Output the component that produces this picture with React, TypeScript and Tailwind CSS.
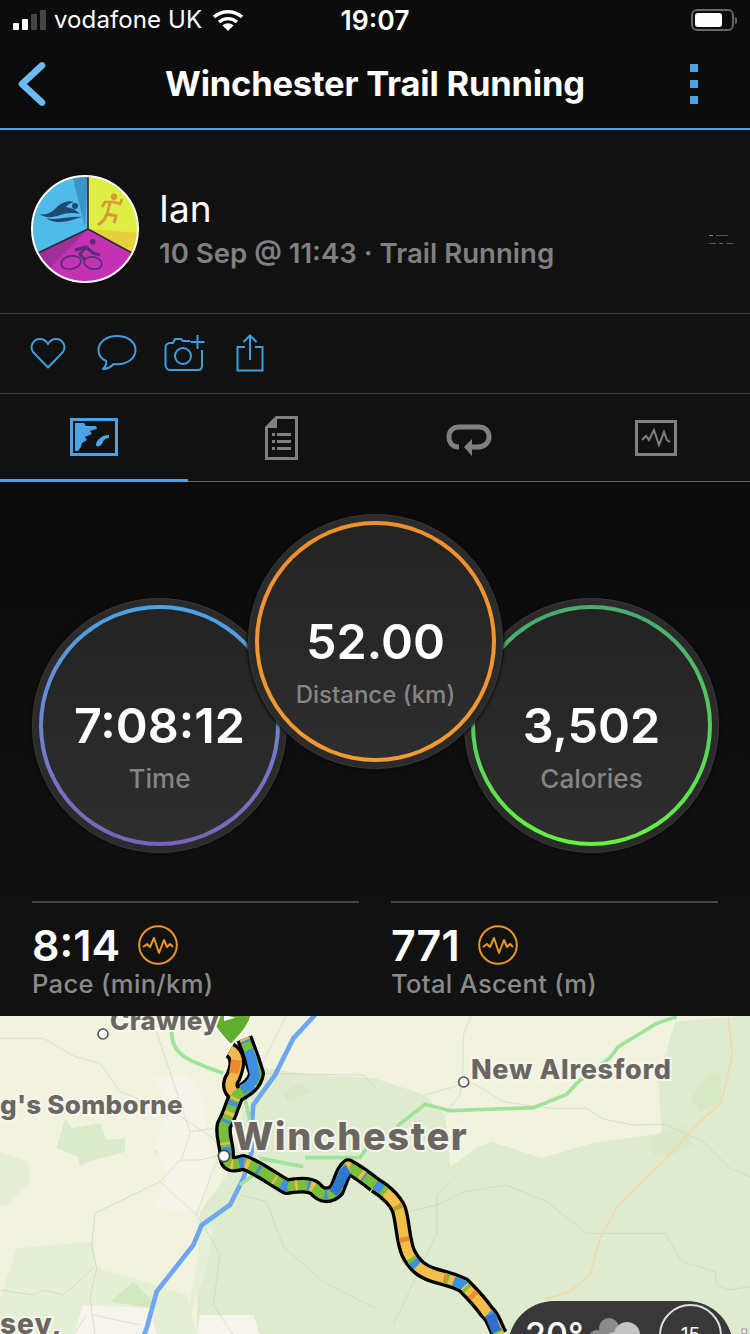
const font = "font-['Inter','Liberation_Sans',sans-serif]";

function Signal() {
  return (
    <div className="flex items-end gap-[3px] h-[20px] w-[33px]">
      <span className="w-[6px] h-[7px] rounded-[1px] bg-white" />
      <span className="w-[6px] h-[11px] rounded-[1px] bg-white" />
      <span className="w-[6px] h-[16px] rounded-[1px] bg-[#444]" />
      <span className="w-[6px] h-[20px] rounded-[1px] bg-[#444]" />
    </div>
  );
}

function Wifi() {
  return (
    <svg width="32" height="22" viewBox="0 0 32 22" fill="none" stroke="white" strokeWidth="3.4">
      <path d="M2 8c8-7 20-7 28 0" />
      <path d="M7 13c5-4.500 13-4.500 18 0" />
      <path d="M11.500 17.500c2.500-2 6.500-2 9 0" />
      <path d="M16 22l-3.500-3.800c2-1.500 5-1.500 7 0z" fill="white" stroke="none" />
    </svg>
  );
}

function Battery() {
  return (
    <div className="flex items-center gap-[1px]">
      <div className="w-[43px] h-[22px] rounded-[6px] border-2 border-[#666] p-[2px]">
        <div className="w-[27px] h-full rounded-[3px] bg-white" />
      </div>
      <span className="w-[2px] h-[7px] rounded-r-sm bg-[#666]" />
    </div>
  );
}

function StatusBar() {
  return (
    <div className="relative flex items-center justify-between h-[40px] px-[13px] text-white">
      <div className="flex items-center">
        <Signal />
        <span className="ml-[8px] text-[24px] leading-none tracking-[0.1px]">vodafone UK</span>
        <span className="ml-[10px]"><Wifi /></span>
      </div>
      <Battery />
      <span className="absolute left-0 right-0 text-center text-[26.500px] font-semibold leading-none">19:07</span>
    </div>
  );
}

function NavBar() {
  return (
    <div className="flex items-center h-[90px] pl-[18px] pr-[52px] border-b-2 border-[#4ba3e3]">
      <svg width="28" height="44" viewBox="0 0 28 44" fill="none" stroke="#6cbcf2" strokeWidth="6.500" strokeLinecap="round" strokeLinejoin="round">
        <path d="M24 3.500 4 22l20 18.500" />
      </svg>
      <h1 className="flex-1 pl-[14px] text-center text-white text-[34.500px] font-bold leading-none tracking-[-0.2px]">Winchester Trail Running</h1>
      <div className="flex flex-col gap-[8px]">
        <span className="w-[8px] h-[8px] bg-[#4ba3e3]" />
        <span className="w-[8px] h-[8px] bg-[#4ba3e3]" />
        <span className="w-[8px] h-[8px] bg-[#4ba3e3]" />
      </div>
    </div>
  );
}

function Avatar() {
  return (
    <svg width="110" height="110" viewBox="0 0 110 110" className="shrink-0">
      <defs>
        <clipPath id="avatarClip"><circle cx="55" cy="55" r="53" /></clipPath>
      </defs>
      <g clipPath="url(#avatarClip)">
        <rect width="110" height="110" fill="#4fbbe8" />
        <path d="M58 55V0H110V85L102 79z" fill="#dfee45" />
        <path d="M58 55 110 59 102 79z" fill="#e8cf3c" />
        <path d="M58 55 102 79 90 120H20L8 79z" fill="#c432b4" />
        <path d="M58 55 8 79 20 94z" fill="#a02f98" />
        <path d="M43 4 58 2 55 53z" fill="#3d94c6" />
        <path d="M58 2V55L102 79M58 55 8 79" stroke="#2a2a3a" strokeWidth="1.600" fill="none" />
        {/* swimmer */}
        <path d="M9 40C16 42 22 38 27 33 31 29 38 26 44 28 40 29 37 31 36 33 39 34 42 34 45 36L50 40C42 38 36 39 30 41 22 44 15 44 9 40z" fill="#1d4a72" />
        <circle cx="45" cy="32" r="3" fill="#1d4a72" />
        <path d="M16 44C26 47 40 42 52 43 42 46 26 52 16 44z" fill="#1d4a72" />
        {/* runner */}
        <circle cx="84" cy="22.700" r="3.200" fill="#d69a38" />
        <g fill="none" stroke="#d69a38" strokeWidth="3.200" strokeLinejoin="round">
          <path d="M80 29 77 40M72 33 75 28 84 28 90 30 92 25" strokeWidth="2.600" />
          <path d="M77 40 86 42 84 49M77 40 74 46 68 51" />
        </g>
        {/* cyclist */}
        <circle cx="62.700" cy="67.700" r="2.800" fill="#5b2c78" />
        <path d="M45 76 56 73 63 79 70 81M56 73 50 80 55 86" fill="none" stroke="#5b2c78" strokeWidth="3" strokeLinejoin="round" />
        <ellipse cx="41" cy="88.500" rx="10" ry="6.500" fill="none" stroke="#5b2c78" strokeWidth="1.800" transform="rotate(-12 41 88.500)" />
        <ellipse cx="63" cy="89" rx="9" ry="6" fill="none" stroke="#5b2c78" strokeWidth="1.800" transform="rotate(12 63 89)" />
      </g>
      <circle cx="55" cy="55" r="53" fill="none" stroke="white" strokeWidth="2" />
    </svg>
  );
}

function ProfileRow() {
  return (
    <div className="relative flex items-center h-[184px] pl-[30px] pt-[14px] border-b border-[#3a3a3a]">
      <Avatar />
      <div className="ml-[19px] mt-[1px]">
        <div className="text-white text-[37px] leading-[44px]">Ian</div>
        <div className="mt-[3px] text-[#808080] text-[27.600px] leading-[38px] font-semibold">10 Sep @ 11:43 · Trail Running</div>
      </div>
      <div className="absolute left-[709px] top-[105px] flex flex-col gap-[7px]">
        <div className="flex gap-[3px]"><span className="w-[4px] h-[1px] bg-[#888]" /><span className="w-[12px] h-[1px] bg-[#555]" /></div>
        <div className="flex gap-[3px]"><span className="w-[7px] h-[1px] bg-[#555]" /><span className="w-[4px] h-[1px] bg-[#666]" /><span className="w-[7px] h-[1px] bg-[#555]" /></div>
      </div>
    </div>
  );
}

function ActionRow() {
  const stroke = "#3c9ee0";
  return (
    <div className="flex items-center h-[80px] pl-[30px] pb-[2px] border-b border-[#3a3a3a]">
      <svg width="36" height="32" viewBox="0 0 36 32" fill="none" stroke={stroke} strokeWidth="2">
        <path d="M18 30.500 3.500 15.500C-1 10 3 2 10 2c4 0 6.500 2.500 8 5 1.500-2.500 4-5 8-5 7 0 11 8 6.500 13.500z" strokeLinejoin="round" />
      </svg>
      <svg className="ml-[31px]" width="40" height="38" viewBox="0 0 40 38" fill="none" stroke={stroke} strokeWidth="2">
        <path d="M20 2C9.500 2 1.500 8 1.500 16c0 5 3 9 7.500 11 1 3-1 6-3 8 4 0 8-2 10.500-5 1.500.2 2.500.3 3.500.3 10.500 0 18.500-6 18.500-14.300S30.500 2 20 2z" strokeLinejoin="round" />
      </svg>
      <svg className="ml-[27px]" width="42" height="38" viewBox="0 0 42 38" fill="none" stroke={stroke} strokeWidth="2">
        <path d="M26 7h-7l-2-2h-6L9 9H6c-2.500 0-4.500 2-4.500 4.500V31C1.500 34 3.500 36 6 36h28c2.500 0 4-2 4-4.500V16" />
        <circle cx="19" cy="22" r="8" />
        <path d="M33.500 1v14M26.500 8h14" />
      </svg>
      <svg className="ml-[30px]" width="28" height="38" viewBox="0 0 28 38" fill="none" stroke={stroke} strokeWidth="2">
        <path d="M9 13H1.500v23.500h25V13H19M14 26V2M7.500 8 14 1.500 20.500 8" />
      </svg>
    </div>
  );
}

function TabIcon({ index }: { index: number }) {
  if (index === 0)
    return (
      <svg width="48" height="38" viewBox="0 0 48 38">
        <rect x="1.500" y="1.500" width="45" height="35" fill="none" stroke="#4ba3e3" strokeWidth="3" />
        <path d="M5 5H14L16 8 26 8 27 11 20 13 22 16 15 19 17 22 12 25 11 29 8 33H5z" fill="#4ba3e3" />
        <path d="M26 27C26 22 32 17 39 17L39 20C35 20 33 23 32 26 30 29 26 29 26 27z" fill="#4ba3e3" />
      </svg>
    );
  if (index === 1)
    return (
      <svg width="33" height="44" viewBox="0 0 33 44">
        <path d="M11 0h22v44H0V11zM12 3v9H3v29h27V3z" fill="#808080" />
        <path d="M0 11 11 0v11z" fill="#808080" />
        <path d="M7 17h3v3H7zM12 17h14v3H12zM7 24h3v3H7zM12 24h14v3H12zM7 31h3v3H7zM12 31h14v3H12z" fill="#808080" />
      </svg>
    );
  if (index === 2)
    return (
      <svg className="mt-[5px]" width="46" height="32" viewBox="0 0 46 32" fill="none">
        <path d="M13 23C5 23 3 17 3 13 3 7 7 3 13 3h20c6 0 10 4 10 10 0 6-5 10-11 10h-8" stroke="#808080" strokeWidth="5" />
        <path d="M18 23 26 15v17z" fill="#808080" />
      </svg>
    );
  return (
    <svg width="42" height="36" viewBox="0 0 42 36" fill="none" stroke="#808080">
      <rect x="1.500" y="1.500" width="39" height="33" strokeWidth="3" />
      <path d="M7 20l4-4 3 4 5-10 5 15 5-13 3 8 3 2" strokeWidth="2" />
    </svg>
  );
}

function Tabs() {
  return (
    <div className="grid grid-cols-4 h-[88px] border-b border-[#666]">
      {[0, 1, 2, 3].map((i) => (
        <div key={i} className={`flex items-center justify-center ${i === 0 ? "border-b-[3px] border-[#4ba3e3] mb-[-1px]" : ""}`}>
          <TabIcon index={i} />
        </div>
      ))}
    </div>
  );
}

function Ring({ value, label, ring, labelClass }: { value: string; label: string; ring: string; labelClass: string }) {
  return (
    <div className="w-[255px] h-[255px] rounded-full bg-[#2b2b2b] border border-[#3a3a3a] p-[6px] shadow-[0_0_3px_1px_#0a0a0a] shrink-0">
      <div className={`w-full h-full rounded-full p-[4px] ${ring}`}>
        <div className="w-full h-full rounded-full bg-gradient-to-b from-[#232323] to-[#2e2e2e] flex flex-col items-center justify-center pt-[41px]">
          <div className="text-white text-[48.500px] leading-[58px] font-semibold">{value}</div>
          <div className={`mt-[7px] text-[#858585] leading-[34px] font-medium ${labelClass}`}>{label}</div>
        </div>
      </div>
    </div>
  );
}

function Circles() {
  return (
    <div className="flex items-start pl-[32px] pt-[32px]">
      <div className="mt-[84px]">
        <Ring value="7:08:12" label="Time" labelClass="text-[26px]" ring="bg-gradient-to-b from-[#4ba3e3] to-[#7c62b8]" />
      </div>
      <div className="relative z-10 ml-[-39px] mr-[-39px]">
        <Ring value="52.00" label="Distance (km)" labelClass="text-[24px]" ring="bg-gradient-to-b from-[#ef8f2e] to-[#f39a32]" />
      </div>
      <div className="mt-[84px]">
        <Ring value="3,502" label="Calories" labelClass="text-[26px]" ring="bg-gradient-to-b from-[#4aa86c] to-[#66f23f]" />
      </div>
    </div>
  );
}

function PulseBadge() {
  return (
    <svg width="40" height="40" viewBox="0 0 40 40" fill="none" stroke="#e8952a" strokeWidth="2">
      <circle cx="20" cy="20" r="18.800" />
      <path d="M5 22l4-3 3 3 4-9 5 15 5-13 3 7 3-3 3 3" strokeLinejoin="round" />
    </svg>
  );
}

function Metric({ value, label }: { value: string; label: string }) {
  return (
    <div className="flex-1 border-t-2 border-[#444] pt-[17px]">
      <div className="flex items-center gap-[18px] h-[50px]">
        <span className="text-white text-[43px] leading-none font-semibold">{value}</span>
        <PulseBadge />
      </div>
      <div className="text-[#8a8a8a] text-[25.600px] leading-[28px] font-medium tracking-[0.3px]">{label}</div>
    </div>
  );
}

function MapLabel({ className, children }: { className: string; children: React.ReactNode }) {
  return (
    <span className={`absolute font-extrabold leading-none whitespace-nowrap text-[#6b6760] [-webkit-text-stroke:4px_#f6f6ee] [paint-order:stroke_fill] ${className}`}>
      {children}
    </span>
  );
}

function MapView() {
  const routeA = "M733 70C745 100 755 125 770 175 765 210 735 225 710 240 695 270 690 300 672 330 665 360 680 385 680 420 680 445 690 455 730 442 770 455 815 490 860 515 890 510 925 505 945 520 965 545 990 545 1010 525 1025 490 1030 465 1045 455 1075 470 1100 490 1125 510";
  const routeB = "M690 105C715 120 715 150 700 185 685 205 690 225 705 235";
  const routeC = "M1125 510C1160 530 1195 565 1200 595 1210 640 1210 680 1225 715 1245 755 1270 770 1300 780 1330 790 1350 790 1390 810 1420 840 1440 860 1460 890 1480 905 1485 935 1500 960";
  return (
    <div className="relative flex-1 overflow-hidden bg-[#f1f3de]">
      <svg width="750" height="318" viewBox="0 3 2250 954" className="block">
        {/* downs */}
        <path d="M745 150 900 175 1125 190 1275 240 1335 300 1350 455 1435 395 1475 380 1625 430 1775 385 1985 355 1975 190 2025 20 2250 0V960H590L600 590 680 480 720 330z" fill="#dfebcf" />
        <path d="M0 850 50 700 280 680 290 760 400 790 560 840 590 960H0z" fill="#e5efd4" />
        <path d="M330 860 400 800 450 850 460 880z" fill="#d3e8c0" />
        <path d="M0 410 85 440 90 500 20 570 0 570z" fill="#e6efd3" />
        {/* woods */}
        <path d="M170 400 195 310 215 340 300 325 320 375 375 370 375 410 265 440 240 455 235 425z" fill="#d9ebc8" />
        <path d="M460 410 530 370 540 400 490 440z" fill="#d9ebc8" />
        <path d="M2075 250 2115 190 2160 170 2165 260 2100 290z" fill="#d6e8c4" />
        <path d="M1950 370 2050 330 2080 390 2020 420 1960 420z" fill="#d9e9c8" />
        <path d="M850 230 900 205 930 230 860 260z" fill="#d6e8c4" />
        {/* towns */}
        <path d="M460 190 560 180 610 240 620 345 640 470 600 590 460 580 500 490 470 410 480 350 520 270z" fill="#f5f4e9" />
        <path d="M250 870 450 880 470 960H220z" fill="#f6f4ec" />
        <path d="M600 900 760 900 780 960H590z" fill="#f6f4ec" />
        <path d="M590 620 640 640 620 760 570 900 555 930 600 700z" fill="#e6efda" />
        {/* boundaries */}
        <g fill="none" stroke="#c6c6bc" strokeWidth="1.500">
          <path d="M0 70H130L225 125 300 145 360 230 520 290 640 370 665 420 600 435 540 435 480 500 285 595 275 690 290 760 270 850 285 960" />
          <path d="M470 50 570 350 640 340M545 430 570 355M480 500 590 600 640 460 665 420" />
          <path d="M590 600 610 630 660 720 640 870 700 960M720 540 800 560 850 695 970 800 1125 880" />
          <path d="M780 160 860 0M765 175 1090 180 1125 215M0 825 100 840 130 825 190 840 280 760M280 900 420 930M260 900 220 960" />
          <path d="M1415 0 1390 60 1388 190 1380 240 1340 290 1340 300M1275 240 1380 210 1420 205 1510 260 1610 275 1660 280 1760 280 1810 312 1900 330 1995 328 2110 380 2190 460 2250 485" />
          <path d="M1350 500 1310 540 1310 655 1180 930M1225 590 1310 570 1395 530 1520 510 1640 560 1760 655H1995L2045 740 2145 770 2150 810 2185 825 2250 815" />
        </g>
        {/* rivers and roads */}
        <path d="M945 0 880 70 825 180 760 270 755 330 755 410 730 490 690 570 605 630 580 690 470 830 440 940 432 960" fill="none" stroke="#6ea6f0" strokeWidth="14" />
        <path d="M515 50C515 120 560 135 670 175M730 240C745 280 755 340 750 400M780 430 910 455M915 428H1080L1100 400M720 510 760 480" fill="none" stroke="#9fe39a" strokeWidth="11" />
        <path d="M1190 335 1275 268 1350 287 1600 278 1700 238 1735 200 1830 128 1855 95 1970 25 2030 5" fill="none" stroke="#9fe39a" strokeWidth="11" />
        <path d="M2185 5 2197 120 2165 260 2070 350 1990 440 1855 570 1800 670 1770 780 1710 830 1640 850" fill="none" stroke="#f5d8a5" strokeWidth="5" />

        {/* route */}
        <g fill="none" strokeLinejoin="round">
          <path d={routeA} stroke="black" strokeWidth="50" />
          <path d={routeB} stroke="black" strokeWidth="50" />
          <path d={routeC} stroke="black" strokeWidth="50" />
          <path d={routeB} stroke="#f3b94a" strokeWidth="30" />
          <path d={routeA} stroke="#79bf3b" strokeWidth="30" />
          <path d={routeA} stroke="#3d8fe0" strokeWidth="30" strokeDasharray="14 46 9 75 20 60" />
          <path d={routeA} stroke="#f3b94a" strokeWidth="30" strokeDasharray="7 38 12 85 6 64" />
          <path d="M745 105C755 125 760 160 765 180 758 205 745 215 725 225" stroke="#3d8fe0" strokeWidth="30" />
          <path d="M1000 535C1020 510 1030 470 1045 462" stroke="#2f78d0" strokeWidth="30" />
          <path d="M708 135 702 175" stroke="#ee8a2e" strokeWidth="30" />
          <path d={routeC} stroke="#f3bf4b" strokeWidth="30" />
          <path d={routeC} stroke="#3d8fe0" strokeWidth="30" strokeDasharray="30 230 25 120 35 110 30 400" />
          <path d={routeC} stroke="#79bf3b" strokeWidth="30" strokeDasharray="14 55 10 150 12 110" strokeDashoffset="-25" />
          <path d={routeC} stroke="#ee8a2e" strokeWidth="30" strokeDasharray="8 90 15 170" strokeDashoffset="-90" />
          <path d="M1470 900 1490 950" stroke="#2f6fc8" strokeWidth="30" />
        </g>

        {/* start pin and waypoints */}
        <path d="M630 -10C630 25 665 60 692 90 720 60 755 25 755 -10z" fill="#5fae2e" stroke="white" strokeWidth="5" />
        <path d="M672 0 672 18 706 8z" fill="white" />
        <circle cx="309" cy="57" r="15" fill="white" stroke="#555" strokeWidth="5" />
        <circle cx="672" cy="423" r="17" fill="white" stroke="#444" strokeWidth="5" />
        <circle cx="1391" cy="201" r="15" fill="white" stroke="#555" strokeWidth="5" />
        <rect x="2226" y="942" width="14" height="14" fill="#eee" stroke="#999" strokeWidth="3" />
      </svg>

      <MapLabel className="left-[110px] top-[-8px] text-[26px] tracking-[0.4px]">Crawley</MapLabel>
      <MapLabel className="left-0 top-[76px] text-[26px] tracking-[0.3px]">g's Somborne</MapLabel>
      <MapLabel className="left-[233px] top-[101px] text-[38px] tracking-[1.600px]">Winchester</MapLabel>
      <MapLabel className="left-[471px] top-[40px] text-[27px] tracking-[0.7px]">New Alresford</MapLabel>
      <MapLabel className="left-0 top-[294px] text-[28px] tracking-[1px]">sey,</MapLabel>

      <div className="absolute left-[508px] top-[285px] w-[225px] h-[100px] rounded-[46px] bg-[#383838] flex items-start">
        <span className="ml-[17px] mt-[17px] w-[62px] text-white text-[34px] leading-none font-medium">20°</span>
        <svg className="mt-[17px]" width="56" height="30" viewBox="0 0 56 30">
          <circle cx="22" cy="10" r="10" fill="#8a8a8a" />
          <circle cx="10" cy="20" r="8" fill="#8a8a8a" />
          <circle cx="40" cy="17" r="13" fill="#c4c4c4" />
          <circle cx="27" cy="22" r="8" fill="#c4c4c4" />
        </svg>
        <div className="ml-[16px] mt-[3px] w-[63px] h-[63px] rounded-full border-2 border-[#ddd] flex justify-center">
          <span className="text-white text-[19px] leading-none mt-[19px]">15</span>
        </div>
      </div>
    </div>
  );
}

export default function App() {
  return (
    <div className={`w-[750px] h-[1334px] flex flex-col overflow-hidden bg-[#111] ${font}`}>
      <div className="bg-[#0c0c0c]">
        <StatusBar />
        <NavBar />
      </div>
      <ProfileRow />
      <ActionRow />
      <Tabs />
      <div className="h-[534px] bg-gradient-to-b from-[#0b0b0b] to-[#121212]">
        <Circles />
        <div className="flex gap-[32px] px-[32px] mt-[48px]">
          <Metric value="8:14" label="Pace (min/km)" />
          <Metric value="771" label="Total Ascent (m)" />
        </div>
      </div>
      <MapView />
    </div>
  );
}
